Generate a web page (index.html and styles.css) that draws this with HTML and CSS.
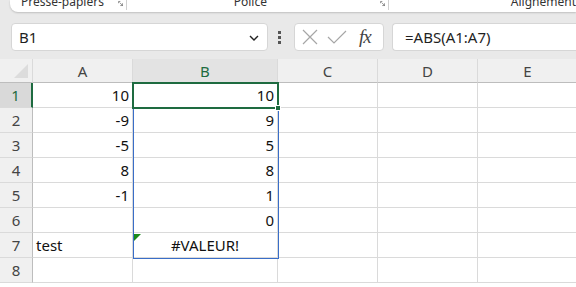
FILE: index.html
```html
<!DOCTYPE html>
<html lang="fr">
<head>
<meta charset="utf-8">
<link rel="stylesheet" href="styles.css">
</head>
<body>
<div class="ribbon">
  <div class="ribbon-inner">
    <span class="grp grp-clip">Presse-papiers</span>
    <svg class="launch l1" width="9" height="9" viewBox="0 0 9 9"><path d="M1 1h3M1 1v3M3 3l5 5M8 4v4H4" fill="none" stroke="#444" stroke-width="1"/></svg>
    <span class="sep s1"></span>
    <span class="grp grp-police">Police</span>
    <svg class="launch l2" width="9" height="9" viewBox="0 0 9 9"><path d="M1 1h3M1 1v3M3 3l5 5M8 4v4H4" fill="none" stroke="#444" stroke-width="1"/></svg>
    <span class="sep s2"></span>
    <span class="grp grp-align">Alignement</span>
  </div>
</div>

<div class="fbar">
  <div class="namebox">
    <span class="nb-text">B1</span>
    <svg class="chev" width="10" height="6" viewBox="0 0 10 6"><path d="M1 1l4 4 4-4" fill="none" stroke="#222" stroke-width="1.4"/></svg>
  </div>
  <div class="vdots"><span></span><span></span><span></span></div>
  <div class="fx-box">
    <svg width="18" height="18" viewBox="0 0 18 18"><path d="M2 2l14 14M16 2L2 16" stroke="#a6a6a6" stroke-width="1.2" fill="none"/></svg>
    <svg width="20" height="18" viewBox="0 0 20 18"><path d="M1 9l6 6L19 3" stroke="#a6a6a6" stroke-width="1.2" fill="none"/></svg>
    <span class="fx">fx</span>
  </div>
  <div class="formula">=ABS(A1:A7)</div>
</div>

<div class="sheet">
  <div class="grid">
    <div class="hd corner"><span class="tri"></span></div>
    <div class="hd">A</div>
    <div class="hd hd-sel">B</div>
    <div class="hd">C</div>
    <div class="hd">D</div>
    <div class="hd">E</div>

    <div class="rh rh-sel">1</div><div class="c num">10</div><div class="c num">10</div><div class="c"></div><div class="c"></div><div class="c"></div>
    <div class="rh">2</div><div class="c num">-9</div><div class="c num">9</div><div class="c"></div><div class="c"></div><div class="c"></div>
    <div class="rh">3</div><div class="c num">-5</div><div class="c num">5</div><div class="c"></div><div class="c"></div><div class="c"></div>
    <div class="rh">4</div><div class="c num">8</div><div class="c num">8</div><div class="c"></div><div class="c"></div><div class="c"></div>
    <div class="rh">5</div><div class="c num">-1</div><div class="c num">1</div><div class="c"></div><div class="c"></div><div class="c"></div>
    <div class="rh">6</div><div class="c"></div><div class="c num">0</div><div class="c"></div><div class="c"></div><div class="c"></div>
    <div class="rh">7</div><div class="c txt">test</div><div class="c ctr">#VALEUR!</div><div class="c"></div><div class="c"></div><div class="c"></div>
    <div class="rh">8</div><div class="c"></div><div class="c"></div><div class="c"></div><div class="c"></div><div class="c"></div>
  </div>
  <div class="spill"></div>
  <div class="selbox"></div>
  <div class="handle"></div>
  <div class="errtri"></div>
</div>
</body>
</html>
```
FILE: styles.css
```css
* { box-sizing: border-box; }
html, body { margin: 0; padding: 0; overflow: hidden; }
body {
  width: 576px;
  height: 287px;
  background: #e9e9e9;
  font-family: "Noto Sans", "Open Sans", sans-serif;
  color: #1f1f1f;
}

.ribbon {
  margin-left: 10px;
  height: 12px;
  background: #fff;
  border-bottom-left-radius: 8px;
  box-shadow: 0 1px 2px rgba(0,0,0,0.18);
  overflow: hidden;
  position: relative;
}
.ribbon-inner {
  display: flex;
  align-items: center;
  height: 20px;
  margin-top: -9px;
  font-size: 12px;
  color: #333;
  white-space: nowrap;
}
.grp-clip { margin-left: 11px; }
.launch { margin-top: 4px; }
.l1 { margin-left: 14px; }
.sep { width: 1px; height: 14px; background: #d0d0d0; margin-top: 4px; }
.s1 { margin-left: 3px; }
.grp-police { margin-left: 107px; }
.l2 { margin-left: 113px; }
.s2 { margin-left: 3px; }
.grp-align { margin-left: 122px; }

.fbar {
  display: flex;
  align-items: center;
  height: 28px;
  margin-top: 11px;
  padding-left: 11px;
}
.namebox {
  width: 257px;
  height: 28px;
  background: #fff;
  border: 1px solid #d6d6d6;
  border-radius: 4px;
  display: flex;
  align-items: center;
  justify-content: space-between;
  padding: 0 8px 0 7px;
  font-size: 15px;
  color: #1f1f1f;
}
.chev { margin-top: 1px; }
.vdots {
  display: flex;
  flex-direction: column;
  gap: 2px;
  margin-left: 10px;
  width: 3px;
}
.vdots span { width: 3px; height: 3px; background: #555; display: block; }
.fx-box {
  margin-left: 13px;
  width: 90px;
  height: 28px;
  background: #fff;
  border: 1px solid #d6d6d6;
  border-radius: 4px;
  display: flex;
  align-items: center;
  padding-left: 6px;
  gap: 8px;
}
.fx {
  font-family: "Liberation Serif", "DejaVu Serif", serif;
  font-style: italic;
  font-size: 19px;
  color: #444;
  margin-left: 4px;
  letter-spacing: -1px;
}
.formula {
  margin-left: 8px;
  flex: 1;
  height: 28px;
  background: #fff;
  border: 1px solid #d6d6d6;
  border-right: none;
  border-radius: 4px 0 0 4px;
  padding-left: 12px;
  display: flex;
  align-items: center;
  font-size: 15px;
}

.sheet {
  position: relative;
  margin-top: 8px;
  height: 228px;
  overflow: hidden;
  background: #fff;
}
.grid {
  display: grid;
  grid-template-columns: 33px 100px 145px 100px 100px 100px;
  grid-template-rows: 24px repeat(8, 25px);
}
.hd {
  background: #f0f0f0;
  border-right: 1px solid #dadada;
  border-bottom: 1px solid #bdbdbd;
  display: flex;
  align-items: center;
  justify-content: center;
  font-size: 15px;
  color: #444;
  padding-top: 1px;
}
.hd-sel { background: #e3e3e3; color: #1e6b40; border-bottom: 1px solid #1e6b40; }
.corner { position: relative; }
.tri {
  position: absolute;
  right: 4px;
  bottom: 4px;
  width: 0;
  height: 0;
  border-left: 14px solid transparent;
  border-bottom: 14px solid #dcdcdc;
}
.rh {
  background: #f0f0f0;
  border-right: 1px solid #bdbdbd;
  border-bottom: 1px solid #dadada;
  display: flex;
  align-items: center;
  justify-content: center;
  font-size: 15px;
  color: #444;
}
.rh-sel { background: #d9d9d9; color: #1e6b40; border-right: 2px solid #1e6b40; }
.c {
  border-right: 1px solid #dadada;
  border-bottom: 1px solid #dadada;
  display: flex;
  align-items: center;
  font-size: 15px;
  color: #111;
  padding: 0 3px;
}
.num { justify-content: flex-end; }
.txt { justify-content: flex-start; }
.ctr { justify-content: center; }

.spill {
  position: absolute;
  left: 133px;
  top: 24px;
  width: 146px;
  height: 176px;
  border: 1px solid #3a6ec8;
}
.selbox {
  position: absolute;
  left: 132px;
  top: 23px;
  width: 147px;
  height: 27px;
  border: 2px solid #1e6b40;
}
.handle {
  position: absolute;
  left: 275px;
  top: 46px;
  width: 6px;
  height: 6px;
  background: #1e6b40;
  border: 1px solid #fff;
}
.errtri {
  position: absolute;
  left: 134px;
  top: 175px;
  width: 0;
  height: 0;
  border-top: 7px solid #1a8a1a;
  border-right: 7px solid transparent;
}
```
